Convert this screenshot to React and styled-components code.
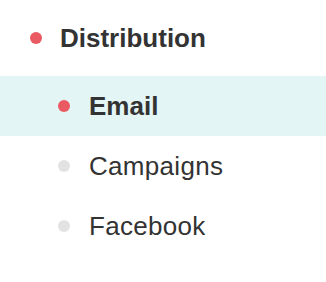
import styled, { createGlobalStyle } from "styled-components";

const GlobalStyle = createGlobalStyle`
  body {
    margin: 0;
    background: #ffffff;
    font-family: "Liberation Sans", Arial, sans-serif;
  }
`;

const StyledNav = styled.nav`
  width: 326px;
  height: 282px;
  padding-top: 8px;
  box-sizing: border-box;
`;

const StyledHeading = styled.div`
  display: flex;
  align-items: center;
  height: 60px;
  padding-left: 30px;
  gap: 18px;
  font-size: 26px;
  font-weight: 700;
  color: #333333;
  margin-bottom: 8px;
`;

const StyledList = styled.ul`
  list-style: none;
  margin: 0;
  padding: 0;
`;

const StyledItem = styled.li`
  display: flex;
  align-items: center;
  height: 60px;
  padding-left: 58px;
  gap: 19px;
  font-size: 26px;
  font-weight: ${({ active }) => (active ? 700 : 400)};
  letter-spacing: ${({ active }) => (active ? "0" : "0.3px")};
  color: #333333;
  background: ${({ active }) => (active ? "#e3f5f5" : "transparent")};
`;

const StyledDot = styled.span`
  width: 12px;
  height: 12px;
  border-radius: 50%;
  flex-shrink: 0;
  background: ${({ active }) => (active ? "#ea5a62" : "#e2e2e2")};
`;

const items = [
  { label: "Email", active: true },
  { label: "Campaigns", active: false },
  { label: "Facebook", active: false },
];

const App = () => {
  return (
    <>
      <GlobalStyle />
      <StyledNav>
        <StyledHeading>
          <StyledDot active />
          <span>Distribution</span>
        </StyledHeading>
        <StyledList>
          {items.map((item) => (
            <StyledItem key={item.label} active={item.active}>
              <StyledDot active={item.active} />
              <span>{item.label}</span>
            </StyledItem>
          ))}
        </StyledList>
      </StyledNav>
    </>
  );
};

export default App;
